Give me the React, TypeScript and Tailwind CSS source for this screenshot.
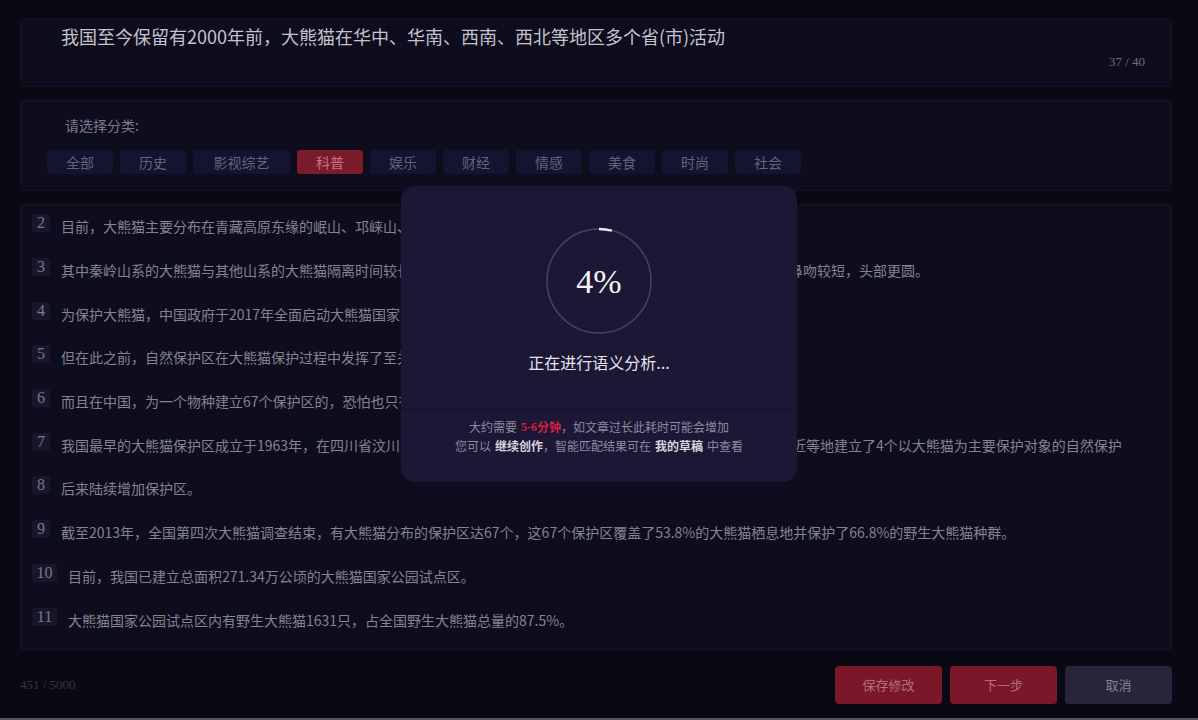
import React from 'react';

const categories = ['全部', '历史', '影视综艺', '科普', '娱乐', '财经', '情感', '美食', '时尚', '社会'];

const paragraphs: { n: number; text: string }[] = [
  { n: 2, text: '目前，大熊猫主要分布在青藏高原东缘的岷山、邛崃山、大小相岭和凉山等山系，' },
  { n: 3, text: '其中秦岭山系的大熊猫与其他山系的大熊猫隔离时间较长，已分化为独立的亚种，其毛色呈棕白相间，体型相对偏小，鼻吻较短，头部更圆。' },
  { n: 4, text: '为保护大熊猫，中国政府于2017年全面启动大熊猫国家公园体制试点工作。' },
  { n: 5, text: '但在此之前，自然保护区在大熊猫保护过程中发挥了至关重要的作用。' },
  { n: 6, text: '而且在中国，为一个物种建立67个保护区的，恐怕也只有大熊猫了。' },
  { n: 7, text: '我国最早的大熊猫保护区成立于1963年，在四川省汶川卧龙、平武王朗、天全喇叭河、南坪白河、青川唐家河及宝兴附近等地建立了4个以大熊猫为主要保护对象的自然保护' },
  { n: 8, text: '后来陆续增加保护区。' },
  { n: 9, text: '截至2013年，全国第四次大熊猫调查结束，有大熊猫分布的保护区达67个，这67个保护区覆盖了53.8%的大熊猫栖息地并保护了66.8%的野生大熊猫种群。' },
  { n: 10, text: '目前，我国已建立总面积271.34万公顷的大熊猫国家公园试点区。' },
  { n: 11, text: '大熊猫国家公园试点区内有野生大熊猫1631只，占全国野生大熊猫总量的87.5%。' },
];

const cjk = { fontFamily: '"Noto Sans CJK SC", "Noto Sans", sans-serif' };
const serif = { fontFamily: '"Liberation Serif", "Noto Sans CJK SC", serif' };

// progress ring, 4% done
const ProgressRing: React.FC<{ percent: number }> = ({ percent }) => {
  const r = 52;
  const c = 2 * Math.PI * r;
  return (
    <div className="relative w-[108px] h-[108px]">
      <svg width="108" height="108" viewBox="0 0 108 108" className="absolute inset-0">
        <circle cx="54" cy="54" r={r} fill="none" stroke="#47425e" strokeWidth="1.5" />
        <circle
          cx="54"
          cy="54"
          r={r}
          fill="none"
          stroke="#e8e8ee"
          strokeWidth="2.5"
          strokeDasharray={`${(c * percent) / 100} ${c}`}
          transform="rotate(-90 54 54)"
        />
      </svg>
      <div className="absolute inset-0 flex items-center justify-center text-[34px] text-[#f2f2f5]" style={serif}>
        {percent}%
      </div>
    </div>
  );
};

export default function App() {
  return (
    <div className="relative w-full h-[720px] bg-[#0a0913] flex flex-col overflow-hidden" style={cjk}>
      <div className="flex flex-col flex-1 pl-[20px] pr-[26px] pt-[18px]">
        {/* title */}
        <div className="h-[69px] rounded-[4px] bg-[#0e0d1e] border border-[#141329] pl-[40px] pr-[26px] pt-[3px] flex flex-col">
          <div className="text-[18px] leading-[28px] text-[#c4c3cb]">
            我国至今保留有2000年前，大熊猫在华中、华南、西南、西北等地区多个省(市)活动
          </div>
          <div className="text-right text-[13px] leading-[18px] text-[#6f6d7e] mt-[3px]" style={serif}>
            37 / 40
          </div>
        </div>

        {/* categories */}
        <div className="mt-[13px] h-[91px] rounded-[4px] bg-[#0e0d1e] border border-[#141329] pl-[26px] pt-[14px]">
          <div className="pl-[18px] text-[14px] leading-[20px] text-[#7c7a8c]">请选择分类:</div>
          <div className="flex gap-[7px] mt-[15px]">
            {categories.map((c) => (
              <div
                key={c}
                className={
                  (c === '影视综艺' ? 'w-[97px] ' : 'w-[66px] ') +
                  (c === '科普'
                    ? 'h-[24px] flex items-center justify-center rounded-[3px] bg-[#7b1a2b] text-[#c27583] text-[14px]'
                    : 'h-[24px] flex items-center justify-center rounded-[3px] bg-[#141330] text-[#656379] text-[14px]')
                }
              >
                {c}
              </div>
            ))}
          </div>
        </div>

        {/* paragraphs */}
        <div className="mt-[13px] h-[446px] rounded-[4px] bg-[#0e0d1e] border border-[#141329] pl-[11px] pr-[20px] overflow-hidden">
          {paragraphs.map((p) => (
            <div key={p.n} className="h-[43.7px] flex items-center whitespace-nowrap">
              <div
                className={
                  (p.n >= 10 ? 'w-[25px] mr-[11px]' : 'w-[18px] mr-[11px]') +
                  ' h-[18px] -mt-[7px] rounded-[2px] bg-[#17162a] text-[#7b798c] text-[16px] leading-[18px] flex items-center justify-center shrink-0'
                }
                style={serif}
              >
                {p.n}
              </div>
              <div className="text-[14px] text-[#85838f] overflow-hidden">{p.text}</div>
            </div>
          ))}
        </div>

        {/* footer */}
        <div className="mt-[16px] h-[38px] flex items-center">
          <div className="text-[13px] text-[#34324a] flex-1" style={serif}>
            451 / 5000
          </div>
          <div className="flex gap-[8px]">
            <div className="w-[107px] h-[38px] rounded-[4px] bg-[#7a1728] text-[#b2707c] text-[13px] flex items-center justify-center">
              保存修改
            </div>
            <div className="w-[107px] h-[38px] rounded-[4px] bg-[#7a1728] text-[#b2707c] text-[13px] flex items-center justify-center">
              下一步
            </div>
            <div className="w-[107px] h-[38px] rounded-[4px] bg-[#29243c] text-[#858198] text-[13px] flex items-center justify-center">
              取消
            </div>
          </div>
        </div>
      </div>
      <div className="h-[2px] bg-[#55545c]" />

      {/* analysing modal */}
      <div className="absolute left-[401px] top-[186px] w-[396px] h-[296px] rounded-[14px] bg-[#1c1735] flex flex-col overflow-hidden">
        <div className="h-[224px] flex flex-col items-center pt-[41px] border-b border-[#141129]">
          <ProgressRing percent={4} />
          <div className="mt-[15px] text-[16px] leading-[24px] text-[#e4e3ea]">正在进行语义分析...</div>
        </div>
        <div className="flex flex-col items-center gap-[3px] pt-[9px] text-[12px] leading-[16px] text-[#8e89a0]">
          <div className="flex">
            <span>大约需要</span>
            <span className="ml-[4px] text-[#d3203f] font-bold" style={serif}>5-6</span>
            <span className="text-[#d3203f] font-bold">分钟</span>
            <span>，如文章过长此耗时可能会增加</span>
          </div>
          <div className="flex">
            <span>您可以</span>
            <span className="ml-[4px] text-[#d6d4de] font-bold">继续创作</span>
            <span>，智能匹配结果可在</span>
            <span className="ml-[4px] text-[#d6d4de] font-bold">我的草稿</span>
            <span className="ml-[4px]">中查看</span>
          </div>
        </div>
      </div>
    </div>
  );
}
